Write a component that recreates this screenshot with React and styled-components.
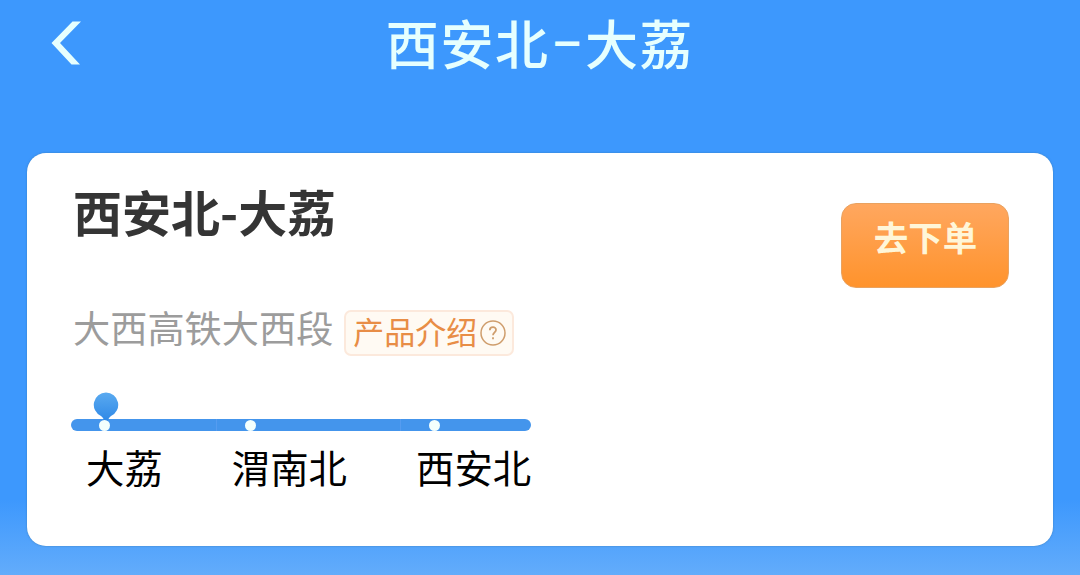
import React from 'react'
import styled, { createGlobalStyle } from "styled-components";

const GlobalStyle = createGlobalStyle`
    * {
        box-sizing: border-box;
    }

    body {
        margin: 0;
        font-family: "Noto Sans CJK SC", sans-serif;
    }
`;

const Page = styled.div`
    width: 1080px;
    height: 575px;
    overflow: hidden;
    background: linear-gradient(#3d98fd 0, #3d98fd 500px, #63acfb 575px);
`;

const Header = styled.header`
    display: grid;
    grid-template-columns: 120px 1fr 120px;
    align-items: center;
    height: 88px;
`;

const BackButton = styled.button`
    display: flex;
    padding: 0;
    margin: -3px 0 0 51px;
    border: 0;
    background: none;
`;

const HeaderTitle = styled.h1`
    margin: -4px 0 0 0;
    font-size: 53px;
    font-weight: 500;
    line-height: 80px;
    letter-spacing: 1.6px;
    text-align: center;
    color: #e6fffe;
`;

const Dash = styled.span`
    padding: 0 1px 0 2px;
    font-family: Roboto, sans-serif;
    font-size: 48px;
    line-height: 1;
    vertical-align: 4px;
`;

const Card = styled.main`
    display: flex;
    justify-content: space-between;
    align-items: flex-start;
    width: 1026px;
    height: 393px;
    margin: 65px 0 0 27px;
    padding: 23px 44px 0;
    border-radius: 19px;
    background: #fff;
    box-shadow: 0 0 2px rgba(50, 110, 160, 0.7);
`;

const RouteTitle = styled.h2`
    margin: 0 0 0 2px;
    font-size: 49px;
    font-weight: 700;
    line-height: 70px;
    color: #353535;
`;

const LineRow = styled.div`
    display: flex;
    align-items: center;
    height: 46px;
    margin: 64px 0 0 2px;
`;

const LineName = styled.span`
    margin-top: -12px;
    font-size: 37.2px;
    font-weight: 400;
    line-height: 46px;
    color: #9c9c9c;
`;

const IntroTag = styled.button`
    display: flex;
    align-items: center;
    gap: 3px;
    width: 170px;
    height: 46px;
    margin-left: 11px;
    padding: 0 0 0 7px;
    border: 2px solid #fce9dc;
    border-radius: 7px;
    background: #fffaf3;
    font-family: inherit;
    font-size: 31px;
    line-height: 40px;
    color: #e88d46;
`;

const TagLabel = styled.span`
    margin-top: -4px;
`;

const Stops = styled.ol`
    display: flex;
    margin: 36px 0 0;
    padding: 0;
    list-style: none;
`;

const Stop = styled.li`
    &:not(:last-child) span {
        margin-right: 54px;
    }

    &:not(:last-child) > div {
        border-right: 1px solid #559cf0;
    }

    &:first-child > div {
        border-radius: 6px 0 0 6px;
    }

    &:last-child > div {
        border-radius: 0 6px 6px 0;
    }
`;

const Track = styled.div`
    position: relative;
    display: flex;
    align-items: center;
    height: 12px;
    margin-top: 27px;
    padding-left: 28px;
    background: #4495ec;
`;

const Dot = styled.i`
    z-index: 1;
    width: 11px;
    height: 11px;
    border-radius: 50%;
    background: #f3fffd;
`;

const Pin = styled.svg`
    position: absolute;
    left: 22px;
    bottom: 5px;
`;

const StopName = styled.span`
    display: block;
    margin-left: 15px;
    font-size: 38.4px;
    font-weight: 400;
    line-height: 56px;
    margin-top: 7px;
    color: #000;
`;

const OrderButton = styled.button`
    width: 168px;
    height: 85px;
    margin-top: 27px;
    padding: 0 0 19px 1px;
    border: 1px solid #e9a260;
    border-radius: 15px;
    background: linear-gradient(#ffa75f, #ff932c);
    font-family: inherit;
    font-size: 34.5px;
    font-weight: 700;
    color: #fff6d8;
`;

const stops = ['大荔', '渭南北', '西安北'];

const App = () => {
    return <>
        <GlobalStyle />
        <Page>
            <Header>
                <BackButton aria-label="返回">
                    <svg width="31" height="44" viewBox="0 0 31 44">
                        <path d="M21.500 .5H30L9 22L29 43.500H20.500L.5 22Z" fill="#e6fffe" />
                    </svg>
                </BackButton>
                <HeaderTitle>西安北<Dash>–</Dash>大荔</HeaderTitle>
            </Header>

            <Card>
                <div>
                    <RouteTitle>西安北-大荔</RouteTitle>
                    <LineRow>
                        <LineName>大西高铁大西段</LineName>
                        <IntroTag>
                            <TagLabel>产品介绍</TagLabel>
                            <svg width="26" height="26" viewBox="0 0 26 26" fill="none" stroke="#cf9d6c" strokeWidth="1.5">
                                <circle cx="13" cy="13" r="12" />
                                <path d="M9.800 10.300C9.800 6.200 16.200 6.200 16 10C15.900 12.300 13 12.600 13 15.300M13 17.300V19.200" strokeWidth="1.800" />
                            </svg>
                        </IntroTag>
                    </LineRow>
                    <Stops>
                        {stops.map((name, index) => (
                            <Stop key={name}>
                                <Track>
                                    {index === 0 && (
                                        <Pin width="26" height="34" viewBox="0 0 26 34">
                                            <defs>
                                                <linearGradient id="pin" x1="0" y1="0" x2="0" y2="1">
                                                    <stop offset="0" stopColor="#5aaaf0" />
                                                    <stop offset="1" stopColor="#2c86e6" />
                                                </linearGradient>
                                            </defs>
                                            <path d="M13 .5a12.300 12.300 0 0 1 5 23.500Q15 26 14.500 31H11.500Q11 26 8 24A12.300 12.300 0 0 1 13 .5Z" fill="url(#pin)" />
                                        </Pin>
                                    )}
                                    <Dot />
                                </Track>
                                <StopName>{name}</StopName>
                            </Stop>
                        ))}
                    </Stops>
                </div>
                <OrderButton>去下单</OrderButton>
            </Card>
        </Page>
    </>
};

export default App;
